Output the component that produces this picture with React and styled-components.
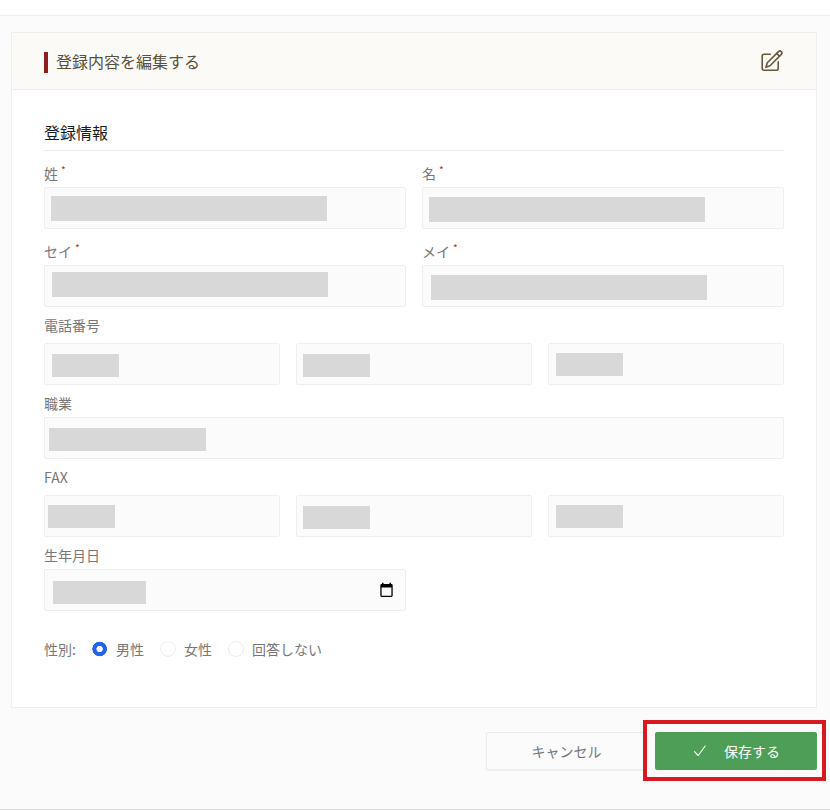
import React from 'react';
import styled, { createGlobalStyle } from 'styled-components';

const GlobalStyle = createGlobalStyle`
  *, *::before, *::after { box-sizing: border-box; }
  body {
    margin: 0;
    background: #fbfbfb;
    color: #777;
    font-family: "Noto Sans CJK JP", sans-serif;
    font-size: 14px;
    line-height: 20px;
  }
`;

const Page = styled.div`
  display: flex;
  flex-direction: column;
  height: 810px;
  overflow: hidden;
  border-bottom: 1px solid #d8d8d8;
`;

const TopBar = styled.header`
  flex: none;
  height: 16px;
  background: #fff;
  border-bottom: 1px solid #ececec;
`;

const Card = styled.main`
  flex: none;
  width: 806px;
  height: 676px;
  margin: 16px 0 0 11px;
  background: #fff;
  border: 1px solid #eee;
`;

const CardHeader = styled.div`
  display: flex;
  align-items: center;
  justify-content: space-between;
  height: 57px;
  padding: 0 33px 0 32px;
  background: #fbfaf7;
  border-bottom: 1px solid #efeeeb;
`;

const Title = styled.h1`
  height: 21px;
  margin: 2px 0 0;
  padding-left: 8px;
  border-left: 4px solid #8b1f1b;
  color: #57503a;
  font-size: 16px;
  font-weight: 400;
  line-height: 19px;
`;

const Form = styled.form`
  display: flex;
  flex-direction: column;
  padding: 30px 32px 0;
`;

const SectionTitle = styled.h2`
  height: 31px;
  margin: 0 0 10px;
  border-bottom: 1px solid #ebebeb;
  color: #1a1a1a;
  font-size: 16px;
  font-weight: 400;
  line-height: 24px;
`;

const Row = styled.div`
  display: flex;
  gap: 16px;
`;

const Group = styled.div`
  display: flex;
  flex-direction: column;
  width: ${(p) => (p.$half ? '362px' : '100%')};
  margin-bottom: ${(p) => p.$after}px;
`;

const Label = styled.label`
  display: flex;
  gap: 3px;
  height: ${(p) => p.$height}px;
  line-height: 25px;
`;

const Required = styled.sup`
  color: #b3312c;
  font-size: 10px;
  line-height: 17px;
`;

const Field = styled.div`
  flex: 1;
  display: flex;
  justify-content: space-between;
  height: 42px;
  background: #fbfbfb;
  border: 1px solid #eee;
  border-radius: 2px;
`;

const Mask = styled.span`
  width: ${(p) => p.$w}px;
  height: ${(p) => p.$h}px;
  margin: ${(p) => p.$top}px 0 0 ${(p) => p.$left}px;
  background: #d8d8d8;
`;

const CalendarIcon = styled.svg`
  flex: none;
  margin: 12px 11px 0 0;
`;

const Choices = styled.div`
  display: flex;
  align-items: center;
  height: 24px;
  margin-top: 16px;
`;

const Choice = styled.label`
  display: flex;
  align-items: center;
  gap: 8px;
  margin-left: 16px;
`;

const Radio = styled.input`
  appearance: none;
  width: 16px;
  height: 16px;
  margin: 0;
  background: #fff;
  border: 1px solid #ececec;
  border-radius: 50%;
  &:checked {
    background: radial-gradient(circle at 7.6px 8px, #fff 2.8px, #2563eb 3.5px, #2563eb 7px, transparent 7.6px);
    border: 0;
  }
`;

const Actions = styled.footer`
  position: relative;
  display: flex;
  justify-content: flex-end;
  gap: 8px;
  margin-top: 24px;
  padding-right: 13px;
`;

const Button = styled.button`
  display: flex;
  align-items: center;
  justify-content: center;
  height: 38px;
  padding: 0;
  border-radius: 2px;
  font: inherit;
`;

const CancelButton = styled(Button)`
  width: 161px;
  background: #fbfbfb;
  border: 1px solid #ebebeb;
  color: #777;
  box-shadow: 0 1px 2px rgba(0, 0, 0, 0.05);
`;

const SaveButton = styled(Button)`
  gap: 17px;
  width: 162px;
  padding-left: 1px;
  background: #4f9e57;
  border: 0;
  color: #fff;
`;

const Highlight = styled.div`
  position: absolute;
  top: -12px;
  right: 4px;
  width: 183px;
  height: 61px;
  border: 4px solid #d91920;
  pointer-events: none;
`;

function EditIcon() {
  return (
    <svg width="22" height="22" viewBox="0 0 22 22" fill="none" stroke="#655a3d" strokeWidth="1.6" strokeLinecap="round" strokeLinejoin="round">
      <path d="M9.3 4.3H3.2a2 2 0 0 0-2 2v12a2 2 0 0 0 2 2h12a2 2 0 0 0 2-2v-6.5" />
      <path d="M17.5 1.6a1.95 1.95 0 0 1 2.8 2.8L9 15.7l-4.1 1.6 1.4-4.5Z" />
      <path d="m15.7 3.4 2.8 2.8" />
    </svg>
  );
}

function MaskedField({ mask: [left, top, w, h], children }) {
  return (
    <Field>
      <Mask $left={left} $top={top} $w={w} $h={h} />
      {children}
    </Field>
  );
}

function FieldGroup({ label, required, masks, half, after, labelHeight = 26, children }) {
  return (
    <Group $half={half} $after={after}>
      <Label $height={labelHeight}>
        {label}
        {required && <Required>*</Required>}
      </Label>
      <Row>
        {masks.map((m, i) => (
          <MaskedField key={i} mask={m}>{children}</MaskedField>
        ))}
      </Row>
    </Group>
  );
}

export default function App() {
  return (
    <>
      <GlobalStyle />
      <Page>
        <TopBar />
        <Card>
          <CardHeader>
            <Title>登録内容を編集する</Title>
            <EditIcon />
          </CardHeader>
          <Form>
            <SectionTitle>登録情報</SectionTitle>
            <Row>
              <FieldGroup half required label="姓" after={10} masks={[[6, 8, 276, 25]]} />
              <FieldGroup half required label="名" after={10} masks={[[6, 9, 276, 25]]} />
            </Row>
            <Row>
              <FieldGroup half required label="セイ" after={6} masks={[[7, 6, 276, 25]]} />
              <FieldGroup half required label="メイ" after={6} masks={[[8, 9, 276, 25]]} />
            </Row>
            <FieldGroup
              label="電話番号"
              labelHeight={30}
              after={6}
              masks={[[7, 10, 67, 23], [6, 10, 67, 23], [7, 9, 67, 23]]}
            />
            <FieldGroup label="職業" after={6} masks={[[4, 10, 157, 23]]} />
            <FieldGroup
              label="FAX"
              labelHeight={30}
              after={6}
              masks={[[3, 9, 67, 23], [6, 10, 67, 23], [7, 9, 67, 23]]}
            />
            <FieldGroup half label="生年月日" after={10} masks={[[8, 11, 93, 23]]}>
              <CalendarIcon width="15" height="16" viewBox="0 0 15 16">
                <path fill="#000" fillRule="evenodd" d="M3 .7h1.5V2h6V.7H12V2h.3A1.400 1.400 0 0 1 13.700 3.400v10.100a1.400 1.400 0 0 1-1.400 1.400h-9.600A1.400 1.400 0 0 1 1.300 13.500V3.400A1.400 1.400 0 0 1 2.700 2H3ZM2.600 5.500v8.200h9.800V5.500Z" />
              </CalendarIcon>
            </FieldGroup>
            <Choices>
              <span>性別:</span>
              <Choice><Radio type="radio" name="gender" defaultChecked />男性</Choice>
              <Choice><Radio type="radio" name="gender" />女性</Choice>
              <Choice><Radio type="radio" name="gender" />回答しない</Choice>
            </Choices>
          </Form>
        </Card>
        <Actions>
          <CancelButton type="button">キャンセル</CancelButton>
          <SaveButton type="button">
            <svg width="14" height="14" viewBox="0 0 14 14" fill="none" stroke="#fff" strokeWidth="1.1" strokeLinecap="round" strokeLinejoin="round">
              <path d="M1.500 7.600 5.200 11.500 12.200 2" />
            </svg>
            保存する
          </SaveButton>
          <Highlight />
        </Actions>
      </Page>
    </>
  );
}
